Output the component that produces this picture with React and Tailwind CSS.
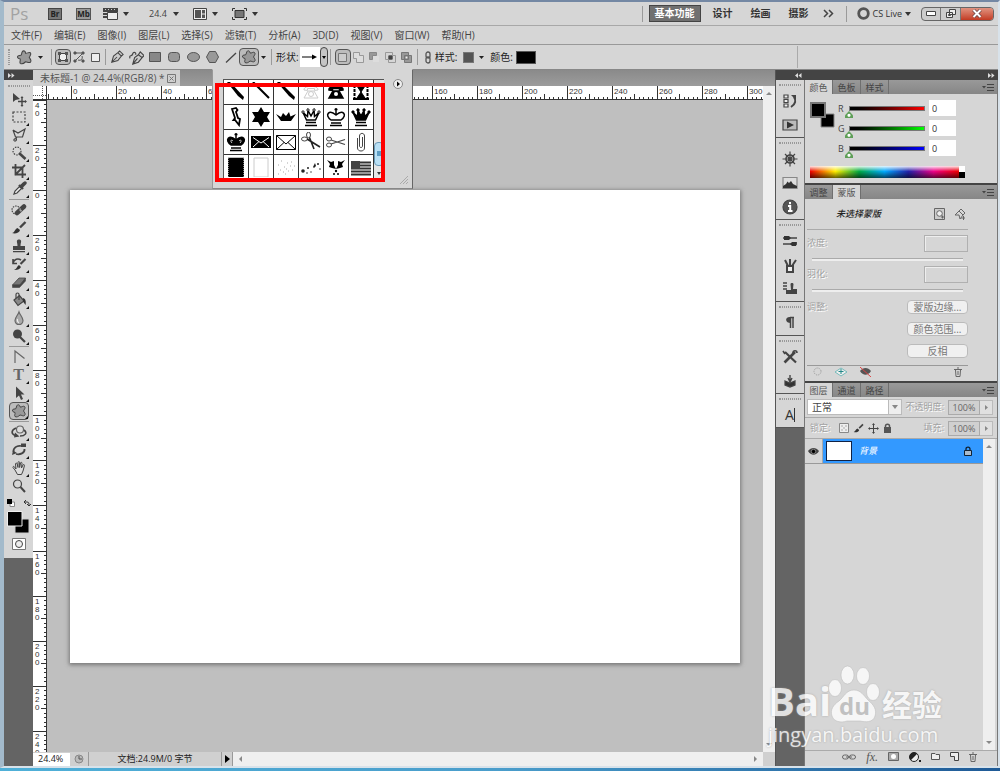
import React, { useEffect, useRef, useState } from "react";

const FONT = "font-['Open_Sans','Noto_Sans_CJK_SC',sans-serif]";

const menus = [
  "文件(F)", "编辑(E)", "图像(I)", "图层(L)", "选择(S)", "滤镜(T)",
  "分析(A)", "3D(D)", "视图(V)", "窗口(W)", "帮助(H)",
];

const BLOB =
  "M6 2.5C7 1 9 2 9 4C10.500 4.500 12 2.500 13.500 3.500C15 5 13 6.500 12.500 8C13.500 9.500 15 11 13.500 12.500C12 13.500 10.500 12 9 12C7.500 13.500 5.500 14.500 4 13.500C3 12 4.500 11 4 9.500C2.500 9 1 8.500 1.500 7C2 5.500 4 6.500 5 5.500C5.500 4.500 5.200 3.500 6 2.500Z";

function Svg({ size = 16, box = "0 0 16 16", children }) {
  return (
    <svg
      width={size}
      height={size}
      viewBox={box}
      fill="none"
      stroke="#444"
      strokeWidth="1.2"
      className="shrink-0"
      aria-hidden="true"
    >
      {children}
    </svg>
  );
}

function Caret() {
  return (
    <svg width="6" height="4" viewBox="0 0 6 4" fill="#333" className="shrink-0">
      <path d="M0 0H6L3 4Z" />
    </svg>
  );
}

function Divider() {
  return <div className="h-4 w-px shrink-0 bg-[#9a9a9a]" />;
}

/* ---------- tool icons ---------- */
const toolIcons = {
  move: (
    <>
      <path d="M2 2V11L4.500 9L9 8Z" fill="#444" stroke="none" />
      <path d="M11 6.500V14.500M7 10.500H15" strokeWidth="1.400" />
      <path d="M11 5L9.500 7H12.500ZM11 16L9.500 14H12.500ZM16 10.500L14 9V12Z" fill="#444" stroke="none" />
    </>
  ),
  marquee: <rect x="2" y="3" width="12" height="10" strokeDasharray="2 1.500" />,
  lasso: <path d="M2 3L7 6L14 2L11.500 10H6L5 11.500C6.500 13 4 15 3 13.500C2.500 12 4 11.500 5 11.500M2 3L4.500 10L6 10" />,
  wand: (
    <>
      <circle cx="6" cy="6" r="4" strokeDasharray="1.500 1.200" />
      <path d="M8 8L14.500 14" strokeWidth="2.600" />
    </>
  ),
  crop: <path d="M4.500 1V11.500H15M1 4.500H11.500V15M4 12L14 2" strokeWidth="1.800" />,
  eyedropper: (
    <>
      <path d="M3 13L4 10L8.500 5.500L10.500 7.500L6 12Z" fill="#eee" />
      <path d="M8 4L12 8M9.500 5.500L13 2" strokeWidth="2.400" />
      <path d="M11 5L14 2" strokeWidth="3.400" strokeLinecap="round" />
    </>
  ),
  heal: (
    <>
      <circle cx="5" cy="8" r="4" strokeDasharray="1.500 1" />
      <path d="M6 11L13 4.500" strokeWidth="4.500" strokeLinecap="round" />
      <path d="M8 8L11 8.500M9 6L10 10" stroke="#aaa" strokeWidth="0.800" />
    </>
  ),
  brush: (
    <>
      <path d="M14.500 2L9 7.500" strokeWidth="2.400" />
      <path d="M1 13C4 12.500 3.500 9 6.500 8L9 10C8.500 13 4 14 1 13Z" fill="#333" stroke="none" />
    </>
  ),
  stamp: <path d="M6 2.500C6.500 1 9.500 1 10 2.500C10.500 4 9.500 5 9.500 8H14V12H2V8H6.500C6.500 5 5.500 4 6 2.500ZM2 13H14V14.200H2Z" fill="#444" stroke="none" />,
  history: (
    <>
      <path d="M14.500 3L9.500 8" strokeWidth="2.200" />
      <path d="M3 14C6 13 6 10 8 9L10 11C9 13 6 14.500 3 14Z" fill="#333" stroke="none" />
      <path d="M2 7C3 3 7 2 10 4M2 3V7.500H6" strokeWidth="1.600" />
    </>
  ),
  eraser: (
    <>
      <path d="M1.500 11L8 4H14.500L9 11Z" fill="#777" strokeWidth="0.800" />
      <path d="M1.500 11V13.500H8.500L14.500 7V4L9 11Z" fill="#444" strokeWidth="0.600" />
    </>
  ),
  bucket: (
    <>
      <path d="M3 8L8.500 3.500L13 9L7 13.500Z" fill="#888" />
      <path d="M8 8V2.500C8 0.500 5 0.500 5 2.500V6" />
      <path d="M12 6C15 7 15 10 14.500 13L12 9.500Z" fill="#333" stroke="none" />
    </>
  ),
  drop: (
    <>
      <path d="M8 2C9 5 12 7.500 12 10.500C12 13 10 14.500 8 14.500C6 14.500 4 13 4 10.500C4 7.500 7 5 8 2Z" fill="#aaa" stroke="#666" />
      <path d="M6.500 9C6 11 7 12.500 8 12.500" stroke="#eee" />
    </>
  ),
  dodge: (
    <>
      <circle cx="6.500" cy="6" r="4.500" fill="#444" stroke="none" />
      <path d="M9 9L14 14" strokeWidth="2.200" />
    </>
  ),
  pen: <path d="M4 14V2L13.500 9.500" stroke="#666" />,
  arrow: <path d="M5 1.500V13L8 10.500L10 15L12 14L10 9.500H13.500Z" fill="#444" stroke="none" />,
  shape: <path d={BLOB} fill="#999" strokeWidth="1" />,
  orbit: (
    <>
      <circle cx="9" cy="5.500" r="3.500" fill="#ddd" stroke="#666" />
      <path d="M5 4C0 6 0 10 4 11.500M13 6C17 9 14 12 9 12" strokeWidth="1.600" />
      <path d="M3 13.500L4 8.500L8.500 12.500Z" fill="#444" stroke="none" />
    </>
  ),
  camera: (
    <>
      <path d="M2.500 10C2 6 6 3 10 4M13.500 7C14 11 9 13 5 12" strokeWidth="1.800" />
      <path d="M1 13L2 8.500L6 11ZM10 1.500H15V5H10Z" fill="#444" stroke="none" />
    </>
  ),
  hand: <path d="M4 10L2 7.500C1.500 6.500 3 6 3.500 7L5 9L4.500 4C4.500 2.800 6 2.800 6.200 4L7 7.500V2.500C7 1.300 8.600 1.300 8.600 2.500V7.500L9.500 3C9.800 1.900 11.200 2.200 11 3.500L10.500 8L12 5C12.600 4 13.800 4.600 13.400 5.800L12 11L10.500 14.500H6.500Z" fill="#ddd" strokeWidth="1" />,
  zoom: (
    <>
      <circle cx="6.500" cy="6" r="4" />
      <path d="M9.500 9L14 14" strokeWidth="2" />
    </>
  ),
};

const toolGroups = [
  ["move", "marquee", "lasso", "wand", "crop", "eyedropper"],
  ["heal", "brush", "stamp", "history", "eraser", "bucket", "drop", "dodge"],
  ["pen", "type", "arrow", "shape"],
  ["orbit", "camera", "hand", "zoom"],
];

function Tool({ name, active, onClick }) {
  return (
    <button
      aria-label={name}
      onClick={onClick}
      className={`relative flex h-[18px] w-[20px] items-center justify-center ${
        active ? "rounded-sm border border-[#555] bg-[#bdbdbd]" : ""
      }`}
    >
      {name === "type" ? (
        <span className="font-['Liberation_Serif',serif] text-[16px] leading-4 font-bold text-[#666]">T</span>
      ) : (
        <Svg>{toolIcons[name]}</Svg>
      )}
      {name !== "move" && name !== "zoom" && (
        <svg width="3" height="3" className="absolute right-0 bottom-0">
          <path d="M3 0V3H0Z" fill="#111" />
        </svg>
      )}
    </button>
  );
}

function Grip() {
  return <div className="mx-auto mt-1 mb-[3px] h-[2px] w-[22px] border-y border-dotted border-[#999]" />;
}

function ToolBar() {
  const [active, setActive] = useState("shape");

  return (
    <aside className="flex w-[29px] shrink-0 flex-col bg-[#646464]">
      <div className="flex h-[10px] items-center bg-[#444] pl-1 text-[#ddd]">
        <svg width="7" height="5" fill="currentColor"><path d="M0 0L3 2.500L0 5ZM3.500 0L6.500 2.500L3.500 5Z" /></svg>
      </div>
      <div className="flex flex-col items-center bg-[#d6d6d6] pt-px pb-2">
        <Grip />
        {toolGroups.map((group, i) => (
          <div
            key={i}
            className={`flex flex-col items-center ${i > 0 ? "mt-px border-t border-[#999] pt-px" : ""}`}
          >
            {group.map((name) => (
              <Tool key={name} name={name} active={active === name} onClick={() => setActive(name)} />
            ))}
          </div>
        ))}
        <div className="mt-1 flex gap-2">
          <svg width="8" height="8"><path d="M3 3H7.500V7.500H3Z" fill="#fff" stroke="#888" /><path d="M0 0H5V5H0Z" fill="#000" /></svg>
          <svg width="8" height="8" fill="none" stroke="#333"><path d="M1 3H4C6 3 6 4 6 7M3 1L1 3L3 5M4 5L6 7L8 5" /></svg>
        </div>
        <svg width="23" height="23" className="mt-1">
          <path d="M8 8H22V22H8Z" fill="#000" stroke="#ccc" />
          <path d="M0.500 0.500H15V15H0.500Z" fill="#000" stroke="#eee" />
        </svg>
        <button aria-label="快速蒙版" className="mt-1">
          <svg width="14" height="12" stroke="#777">
            <path d="M0.500 0.500H13.500V11.500H0.500Z" fill="#fff" />
            <circle cx="7" cy="6" r="3.500" fill="#eee" stroke="#444" />
          </svg>
        </button>
      </div>
    </aside>
  );
}

/* ---------- top bars ---------- */
function AppBar() {
  return (
    <header className="flex h-[24px] shrink-0 items-center border-b border-[#a8a8a8] pr-1 pl-[6px] text-[10px] text-[#444]">
      <span className="w-[38px] text-[17px] leading-5 text-[#a2a2a2]">Ps</span>
      <button className="h-3 w-[14px] border border-[#444] bg-[#777] text-center text-[8px] leading-[10px] font-bold text-[#222]">Br</button>
      <button className="ml-[14px] h-3 w-[15px] border border-[#555] bg-[#999] text-center text-[8px] leading-[10px] font-bold text-[#222]">Mb</button>
      <button className="ml-3 flex items-center gap-[5px]" aria-label="查看额外内容">
        <svg width="15" height="12"><path d="M0 0H15V4H0ZM0 5H4V7H0ZM0 8H4V10H0Z" fill="#444" /><path d="M4.500 4.500H14.500V11.500H4.500Z" fill="#eee" stroke="#444" /><path d="M2 1.500H14" stroke="#ccc" strokeDasharray="1 2" /></svg>
        <Caret />
      </button>
      <button className="ml-5 flex items-center gap-[6px] text-[9px]">24.4 <Caret /></button>
      <button className="ml-[14px] flex items-center gap-[5px]" aria-label="排列文档">
        <svg width="14" height="12"><path d="M0.500 0.500H13.500V11.500H0.500Z" fill="#eee" stroke="#444" /><path d="M2 2H8V10H2ZM9 2H12V5.500H9ZM9 6.500H12V10H9Z" fill="#555" /></svg>
        <Caret />
      </button>
      <button className="ml-[14px] flex items-center gap-[5px]" aria-label="屏幕模式">
        <svg width="15" height="12" fill="none" stroke="#333"><path d="M0.500 3V0.500H3M12 0.500H14.500V3M14.500 9V11.500H12M3 11.500H0.500V9" /><path d="M3 2.500H12V9.500H3Z" fill="#777" /></svg>
        <Caret />
      </button>
      <div className="ml-auto flex items-center text-[10px] font-bold text-[#333]">
        <Divider />
        <button className="ml-[6px] h-[17px] w-[52px] border border-[#444] bg-[#707070] text-white">基本功能</button>
        <button className="ml-3">设计</button>
        <button className="ml-[18px]">绘画</button>
        <button className="ml-[18px]">摄影</button>
        <button className="ml-[14px]" aria-label="更多">
          <svg width="11" height="9" fill="none" stroke="#444" strokeWidth="1.500"><path d="M1 1L4.500 4.500L1 8M6 1L9.500 4.500L6 8" /></svg>
        </button>
        <div className="mr-[10px] ml-3"><Divider /></div>
        <button className="flex items-center gap-[3px] text-[9px] font-normal">
          <svg width="13" height="13" fill="none"><circle cx="6.500" cy="6.500" r="4.800" stroke="#555" strokeWidth="2.800" /></svg>
          CS Live <Caret />
        </button>
        <div className="ml-[10px] flex h-[14px] overflow-hidden rounded-sm border border-[#666] bg-[#ccc]">
          <button aria-label="最小化" className="flex w-[19px] items-center justify-center border-r border-[#777]">
            <svg width="10" height="5"><path d="M0.500 0.500H9.500V4.500H0.500Z" fill="#fff" stroke="#444" /></svg>
          </button>
          <button aria-label="还原" className="flex w-[20px] items-center justify-center border-r border-[#777]">
            <svg width="10" height="9" fill="#eee" stroke="#444"><path d="M3.500 0.500H9.500V5.500H3.500ZM0.500 3.500H6.500V8.500H0.500Z" /><path d="M2.500 5.500H4.500V6.500H2.500Z" /></svg>
          </button>
          <button aria-label="关闭" className="flex w-[32px] items-center justify-center bg-gradient-to-b from-[#e0927f] to-[#c23a22]">
            <svg width="10" height="9" fill="none"><path d="M1.500 1L8.500 8M8.500 1L1.500 8" stroke="#644" strokeWidth="3.500" /><path d="M1.500 1L8.500 8M8.500 1L1.500 8" stroke="#fff" strokeWidth="2" /></svg>
          </button>
        </div>
      </div>
    </header>
  );
}

function OptButton({ label, active, children }) {
  return (
    <button
      aria-label={label}
      className={`flex h-4 w-4 items-center justify-center ${active ? "rounded-sm border border-[#555] bg-[#bcbcbc]" : ""}`}
    >
      {children}
    </button>
  );
}

function OptionsBar() {
  return (
    <div className="flex h-[25px] shrink-0 items-center border-b border-[#888] pl-1 text-[10px] text-[#222]">
      <div className="h-4 w-[2px] border-x border-dotted border-[#999]" />
      <button className="ml-[6px] flex items-center gap-[5px]" aria-label="自定形状">
        <Svg size={17}><path d={BLOB} fill="#999" strokeWidth="1" /></Svg>
        <svg width="5" height="3"><path d="M0 0H5L2.500 3Z" fill="#222" /></svg>
      </button>
      <div className="mr-[3px] ml-2"><Divider /></div>
      <OptButton label="形状图层" active>
        <svg width="12" height="12"><path d="M2.500 2.500H9.500V9.500H2.500Z" fill="#eee" stroke="#444" /><path d="M1 1H4V4H1ZM8 1H11V4H8ZM1 8H4V11H1ZM8 8H11V11H8Z" fill="#555" /></svg>
      </OptButton>
      <OptButton label="路径">
        <svg width="12" height="12" fill="none" stroke="#555"><path d="M2 2H10L2 10M5 9C8 10 10 8 9 5" /><path d="M1 1H3V3H1ZM9 1H11V3H9ZM1 9H3V11H1ZM9 9H11V11H9Z" fill="#555" /></svg>
      </OptButton>
      <OptButton label="填充像素">
        <svg width="9" height="9"><path d="M0.500 0.500H8.500V8.500H0.500Z" fill="#eee" stroke="#555" /></svg>
      </OptButton>
      <div className="mr-[3px] ml-[2px]"><Divider /></div>
      <div className="flex items-center gap-[3px]">
        <OptButton label="钢笔">
          <Svg size={14}><path d="M2 14L4 7L9 3L13 7L9 12ZM2 14L8 8M9 3L11 1L15 5L13 7" fill="#ccc" /></Svg>
        </OptButton>
        <OptButton label="自由钢笔">
          <Svg size={15}><path d="M4 15L6 8L10 5L14 8L10 13ZM4 15L9 9M1 9C0 4 3 8 4 4C5 1 8 3 7 5M10 5L12 2L16 6L14 8" fill="#ccc" /></Svg>
        </OptButton>
        <OptButton label="矩形"><svg width="12" height="10"><path d="M0.500 0.500H11.500V9.500H0.500Z" fill="#888" stroke="#555" /></svg></OptButton>
        <OptButton label="圆角矩形"><svg width="12" height="10"><rect x="0.500" y="0.500" width="11" height="9" rx="3" fill="#999" stroke="#555" /></svg></OptButton>
        <OptButton label="椭圆"><svg width="13" height="10"><ellipse cx="6.500" cy="5" rx="6" ry="4.500" fill="#999" stroke="#555" /></svg></OptButton>
        <OptButton label="多边形"><svg width="13" height="12"><path d="M3.500 0.500H9.500L12.500 6L9.500 11.500H3.500L0.500 6Z" fill="#999" stroke="#555" /></svg></OptButton>
        <OptButton label="直线"><svg width="12" height="11"><path d="M1 10.500L11 1" stroke="#444" strokeWidth="1.300" /></svg></OptButton>
      </div>
      <button aria-label="自定形状工具" className="flex h-[18px] w-[20px] items-center justify-center rounded-sm border border-[#555] bg-[#bcbcbc]">
        <Svg><path d={BLOB} fill="#999" strokeWidth="1" /></Svg>
      </button>
      <svg width="5" height="3" className="ml-[2px]"><path d="M0 0H5L2.500 3Z" fill="#222" /></svg>
      <div className="mr-1 ml-[5px]"><Divider /></div>
      <span>形状:</span>
      <button aria-label="形状" className="ml-px flex h-5 w-5 items-center justify-center bg-white">
        <svg width="15" height="6"><path d="M0 3H11" stroke="#000" /><path d="M10 0.500L15 3L10 5.500Z" /></svg>
      </button>
      <button aria-label="打开形状" className="flex h-5 w-2 items-center justify-center rounded-sm border border-[#444] bg-[#c4c4c4]">
        <svg width="4" height="3"><path d="M0 0H4L2 3Z" /></svg>
      </button>
      <div className="mr-1 ml-[2px]"><Divider /></div>
      <OptButton label="新建" active><svg width="9" height="9"><path d="M0.500 0.500H8.500V8.500H0.500Z" fill="#ccc" stroke="#777" /></svg></OptButton>
      <OptButton label="添加"><svg width="11" height="11"><path d="M0.500 0.500H6.500V3.500H10.500V10.500H3.500V6.500H0.500Z" fill="#ddd" stroke="#999" /></svg></OptButton>
      <OptButton label="减去"><svg width="11" height="11"><path d="M0.500 0.500H7.500V3.500H3.500V7.500H0.500Z" fill="#999" stroke="#888" /><path d="M4 4H10V10H4Z" fill="#ddd" /></svg></OptButton>
      <OptButton label="交叉"><svg width="11" height="11" fill="none" stroke="#999"><path d="M0.500 0.500H7.500V7.500H0.500ZM3.500 3.500H10.500V10.500H3.500Z" /><path d="M4 4H7V7H4Z" fill="#444" stroke="#444" /></svg></OptButton>
      <OptButton label="排除"><svg width="11" height="11" stroke="#777"><path d="M0.500 0.500H7.500V7.500H0.500ZM3.500 3.500H10.500V10.500H3.500Z" fill="#999" /><path d="M4 4H7V7H4Z" fill="#eee" /></svg></OptButton>
      <div className="ml-[2px]"><Divider /></div>
      <svg width="8" height="13" fill="none" stroke="#555" strokeWidth="1.300" className="ml-[6px]"><rect x="2" y="1" width="4" height="6" rx="2" /><rect x="2" y="6" width="4" height="6" rx="2" /></svg>
      <span className="ml-[3px]">样式:</span>
      <button aria-label="样式" className="ml-[6px] flex items-center gap-[5px]">
        <span className="h-[11px] w-[11px] border border-[#777] bg-[#555]" />
        <svg width="5" height="3"><path d="M0 0H5L2.500 3Z" fill="#222" /></svg>
      </button>
      <span className="ml-[6px]">颜色:</span>
      <button aria-label="颜色" className="ml-[3px] h-[13px] w-5 border border-[#555] bg-black" />
      <div className="mr-[200px] ml-auto h-[22px] w-px bg-[#aaa]" />
    </div>
  );
}

/* ---------- custom shape picker ---------- */
const queen = "M4 18.500H16M5 15.500H15M5.500 13L2 5.500L6.500 9.500L7 3.500L10 9L13 3.500L13.500 9.500L18 5.500L14.500 13Z";
const queenDots = "M1 4H3V6H1ZM6 2H8V4H6ZM12 2H14V4H12ZM17 4H19V6H17Z";
const king = "M4 18.500H16M5 16H15M5 13C-2 8 3 2 10 8C17 2 22 8 15 13ZM10 8V1M8.500 2.500H11.500";
const phone = "M3 8C2 3 18 3 17 8L13.500 8.500V6.500H6.500V8.500ZM7 9H13L17 16H3Z";

const shapes = [
  <path d="M1 0L4 0L18 15L17 18L12 14Z" fill="#000" />,
  <path d="M2 0L18 16" stroke="#000" strokeWidth="2" />,
  <path d="M1 0L4 0L19 15L18 18L13 14Z" fill="#000" />,
  <g fill="none" stroke="#ccc"><path d={phone} /><circle cx="10" cy="12" r="2.500" /></g>,
  <g><path d={phone} fill="#000" stroke="#000" strokeWidth="1.500" /><circle cx="10" cy="12" r="2" fill="#fff" /></g>,
  <g stroke="#000"><path d="M2 3H18M2 17H18" strokeWidth="2" /><path d="M3.500 3V17M16.500 3V17" strokeWidth="2" strokeDasharray="3 1" /><path d="M6 4H14L10 10L14 16H6L10 10Z" /></g>,
  <path d="M6 2L10 1L11.500 3L10 5L12 11L14 12L13 18L9 13L7.500 13L9 11L7 5Z" fill="#fff" stroke="#000" strokeWidth="1.800" />,
  <path d="M10 0L13 5L19 5L16 10L19 15L13 15L10 20L7 15L1 15L4 10L1 5L7 5Z" fill="#000" />,
  <path d="M0 7L5 10L7 6L10 9L13 5L14.500 9.500L20 7L15 14H5Z" fill="#000" />,
  <g stroke="#000"><path d={queen} fill="none" strokeWidth="1.500" /><path d={queenDots} fill="#fff" strokeWidth="0.800" /></g>,
  <path d={king} fill="none" stroke="#000" strokeWidth="1.500" />,
  <g stroke="#000"><path d={queen} strokeWidth="1.500" /><path d={queenDots} /></g>,
  <g><path d={king} fill="#000" stroke="#000" strokeWidth="1.500" /><path d="M7 9C5 7 4 9 6 11M13 9C15 7 16 9 14 11" stroke="#fff" fill="none" strokeWidth="0.800" /></g>,
  <g><path d="M0 4H20V16H0Z" fill="#000" /><path d="M2 5.500L10 11L18 5.500M2 15L8 9.500M18 15L12 9.500" stroke="#fff" fill="none" /></g>,
  <path d="M0.500 3.500H19.500V17.500H0.500ZM0.500 3.500L10 12L19.500 3.500M0.500 17.500L8 10.500M19.500 17.500L12 10.500" stroke="#000" fill="none" />,
  <g fill="none" stroke="#444"><ellipse cx="3.500" cy="7" rx="3" ry="2" /><ellipse cx="7.500" cy="3" rx="2" ry="2.800" /><path d="M6 7L19 15M8.500 5.500L13 17" stroke="#222" strokeWidth="1.600" /></g>,
  <g fill="none" stroke="#444"><ellipse cx="3" cy="7" rx="2.500" ry="2" /><ellipse cx="3" cy="13" rx="2.500" ry="2" /><path d="M5 8L19 12.500M5 12L19 7.500" strokeWidth="1.300" /></g>,
  <path d="M11.500 5V14C11.500 16 8.500 16 8.500 14V4C8.500 0.500 13.500 0.500 13.500 4V16C13.500 20 6.500 20 6.500 16V6" fill="none" stroke="#444" />,
  <path d="M2.500 1H17.500V20H2.500Z" fill="#000" stroke="#000" strokeDasharray="1 1" />,
  <path d="M3 1H17V20H3Z" fill="#fff" stroke="#ccc" />,
  <path d="M2 8h1M5 4h1M8 10h1M11 6h1M14 9h1M16 13h1M4 13h1M7 15h1M12 14h1M9 17h1M15 5h1M18 9h1M2 17h1M10 12h1" stroke="#aaa" />,
  <g fill="#222"><circle cx="2" cy="14" r="1.800" /><circle cx="7" cy="11" r="1" /><circle cx="6" cy="16" r="0.800" /><path d="M12 10L14 6L15 9L13 11Z" /><circle cx="17" cy="7" r="1" /><circle cx="10" cy="15" r="0.700" /><circle cx="19" cy="12" r="0.800" /></g>,
  <g fill="#000"><path d="M1 3L5 5L8 4L8 8L10 12L6 11L3 10L4 7ZM19 3L15 5L12 4L12 8L10 12L14 11L17 10L16 7Z" /><circle cx="10" cy="14" r="1.200" /><circle cx="8" cy="17" r="1" /><circle cx="12" cy="17" r="1" /></g>,
  <g><path d="M0 5.500H20M0 8.500H20M0 11.500H20M0 14.500H20M0 17.500H20" stroke="#333" strokeWidth="1.800" /><path d="M0 4H9V12H0Z" fill="#444" /></g>,
];

function ShapePicker() {
  return (
    <div className="absolute top-[67px] left-[208px] z-10 h-[120px] w-[201px] border border-[#999] border-t-[#d6d6d6] border-r-[#666] border-b-[#888] bg-[#d6d6d6]">
      <div className="absolute top-[9px] left-[10px] flex border-t border-l border-[#555]">
        <div className="grid h-[99px] grid-cols-6 overflow-hidden bg-white">
          {shapes.map((shape, i) => (
            <button
              key={i}
              aria-label={`形状 ${i + 1}`}
              className="flex h-[25px] w-[25px] items-center justify-center border-r border-b border-[#333]"
            >
              <svg width="20" height="20" viewBox="0 0 20 20">{shape}</svg>
            </button>
          ))}
        </div>
        <div className="relative w-[10px] bg-[#e6e6e6]">
          <div className="absolute top-[62px] h-[24px] w-[10px] rounded-sm border border-[#6b9ab8] bg-[#b9e0f5]">
            <div className="mx-auto mt-2 h-[5px] w-1 bg-[#5d9dc4]" />
          </div>
          <svg width="4" height="3" className="absolute bottom-1 left-[3px]"><path d="M0 0H4L2 3Z" fill="#333" /></svg>
        </div>
      </div>
      <button aria-label="菜单" className="absolute top-[9px] right-[9px]">
        <svg width="10" height="10"><circle cx="5" cy="5" r="4.500" fill="#eee" stroke="#888" /><path d="M4 2.500L7 5L4 7.500Z" fill="#000" /></svg>
      </button>
      <svg width="8" height="8" className="absolute right-1 bottom-1" stroke="#aaa"><path d="M0 8L8 0M3 8L8 3M6 8L8 6" /></svg>
      <div className="absolute top-[13px] left-[2px] h-[99px] w-[170px] border-4 border-[#f00]" />
    </div>
  );
}

/* ---------- document ---------- */
const STEP = 4.507; // pixels for two millimetres at 24.4%

function useSize() {
  const ref = useRef(null);
  const [size, setSize] = useState({ width: 0, height: 0 });

  useEffect(() => {
    const observer = new ResizeObserver(([entry]) => {
      setSize({ width: entry.contentRect.width, height: entry.contentRect.height });
    });
    observer.observe(ref.current);
    return () => observer.disconnect();
  }, []);

  return [ref, size];
}

function getTicks(origin, length) {
  const ticks = [];
  for (let i = -Math.ceil(origin / STEP); origin + i * STEP < length; i++) {
    ticks.push({
      i,
      pos: Math.round(origin + i * STEP),
      len: i % 10 === 0 ? 14 : i % 5 === 0 ? 5 : 2,
    });
  }
  return ticks;
}

function HRuler() {
  const [ref, { width }] = useSize();
  const ticks = getTicks(24, width);

  return (
    <div ref={ref} className="h-[14px] min-w-0 flex-1 overflow-hidden border-b border-[#333] bg-white">
      <svg width={width} height="13" aria-label="标尺">
        {ticks.map(({ i, pos, len }) => (
          <path key={i} d={`M${pos + 0.5} ${13 - len}V13`} stroke="#333" />
        ))}
        {ticks.filter(({ i, pos }) => i % 10 === 0 && pos + 14 < width).map(({ i, pos }) => (
          <text key={i} x={pos + 2} y="8" className="fill-[#333] font-['Liberation_Sans',sans-serif] text-[8px]">{i * 2}</text>
        ))}
      </svg>
    </div>
  );
}

function VRuler() {
  const [ref, { height }] = useSize();
  const ticks = getTicks(90, height);

  return (
    <div ref={ref} className="w-[14px] shrink-0 overflow-hidden border-r border-[#333] bg-white">
      <svg width="13" height={height} aria-label="标尺">
        {ticks.map(({ i, pos, len }) => (
          <path key={i} d={`M${13 - len} ${pos + 0.5}H13`} stroke="#333" />
        ))}
        {ticks.filter(({ i }) => i % 10 === 0).map(({ i, pos }) =>
          String(Math.abs(i * 2)).split("").map((digit, n) => (
            <text key={`${i}-${n}`} x="2" y={pos + 8 + n * 8} className="fill-[#333] font-['Liberation_Sans',sans-serif] text-[8px]">{digit}</text>
          ))
        )}
      </svg>
    </div>
  );
}

function Arrow({ d }) {
  return <svg width="6" height="6" className="shrink-0"><path d={d} fill="#888" /></svg>;
}

function DocumentArea() {
  return (
    <main className="flex min-w-0 flex-1 flex-col bg-[#bfbfbf]">
      <div className="flex h-4 shrink-0 bg-gradient-to-b from-[#8a8a8a] to-[#9c9c9c]">
        <div className="flex h-4 items-center gap-[3px] bg-[#d0d0d0] pr-1 pl-[7px] text-[10px] text-[#555]">
          未标题-1 @ 24.4%(RGB/8) *
          <button aria-label="关闭文档">
            <svg width="9" height="9" fill="none" stroke="#777"><path d="M0.500 0.500H8.500V8.500H0.500ZM2.500 2.500L6.500 6.500M6.500 2.500L2.500 6.500" /></svg>
          </button>
        </div>
      </div>
      <div className="flex min-h-0 flex-1">
        <div className="flex min-w-0 flex-1 flex-col">
          <div className="flex h-[14px] shrink-0">
            <svg width="14" height="14" className="shrink-0 border-r border-b border-[#333] bg-white">
              <path d="M9.500 0V14M0 9.500H14" stroke="#555" strokeDasharray="1 1" />
            </svg>
            <HRuler />
          </div>
          <div className="flex min-h-0 flex-1">
            <VRuler />
            <div className="flex flex-1 px-[23px] pt-[90px] pb-[89px]">
              <div className="flex-1 bg-white shadow-[0_1px_4px_1px_#777]" />
            </div>
          </div>
        </div>
        <div className="flex w-3 shrink-0 flex-col items-center justify-between bg-[#efefef] py-1">
          <Arrow d="M0 5H6L3 2Z" />
          <Arrow d="M0 1H6L3 4Z" />
        </div>
      </div>
      <div className="flex h-[14px] shrink-0 items-center bg-[#d0d0d0] text-[10px] text-[#222]">
        <input aria-label="缩放" defaultValue="24.4%" className="h-[13px] w-[37px] bg-white pl-[5px] text-[9px]" />
        <div className="flex h-full w-[19px] items-center justify-center border-r border-[#999]">
          <svg width="10" height="10" fill="none" stroke="#888"><circle cx="5" cy="5" r="4" fill="#bbb" /><path d="M5 2V5H8" stroke="#555" /></svg>
        </div>
        <div className="flex h-full w-[133px] items-center justify-center border-r border-[#999] text-[9px]">文档:24.9M/0 字节</div>
        <button aria-label="状态菜单" className="flex h-full w-[11px] items-center justify-center border-r border-[#999]">
          <svg width="5" height="8"><path d="M0 0L5 4L0 8Z" /></svg>
        </button>
        <div className="flex h-full flex-1 items-center justify-between bg-[#efefef] px-1">
          <Arrow d="M5 0V6L2 3Z" />
          <Arrow d="M1 0V6L4 3Z" />
        </div>
        <div className="w-3" />
      </div>
    </main>
  );
}

/* ---------- icon dock ---------- */
const dock = [
  [
    ["历史记录", <><path d="M2 2H6V5H2ZM2 6.500H6V9.500H2ZM2 11H6V14H2Z" fill="#eee" /><path d="M9 14C14 11 14 7 12 4" strokeWidth="2" /><path d="M9 2H14V7Z" fill="#444" stroke="none" /></>],
    ["动作", <><path d="M1 3H15V13H1Z" fill="#bbb" /><path d="M5 4.500L12 8L5 11.500Z" fill="#333" stroke="none" /></>],
  ],
  [
    ["导航器", <><circle cx="8" cy="8" r="4" strokeWidth="1.600" /><circle cx="8" cy="8" r="1.200" fill="#333" /><path d="M8 0.500V15.500M0.500 8H15.500M3 3L13 13M13 3L3 13" /></>],
    ["直方图", <><path d="M1 2.500H15V13.500H1Z" fill="#ddd" stroke="#888" /><path d="M1 13V11L4 9L5.500 6.500L7 8L9 6L11 9L15 11V13Z" fill="#333" stroke="none" /></>],
    ["信息", <><circle cx="8" cy="8" r="7" fill="#555" stroke="#444" /><path d="M8 3V5.200M6 7H8.200V12M6 12H10.500" stroke="#fff" strokeWidth="2" /></>],
  ],
  [
    ["画笔预设", <><path d="M1 5H15M1 11H15" strokeWidth="1.600" /><path d="M2 3H7L9 5L7 7H2ZM15 9L10 9L8 11L10 13L14 13Z" fill="#333" stroke="none" /></>],
    ["画笔", <><path d="M5 9H11V15H5Z" fill="#eee" strokeWidth="2" /><path d="M6 9L3 3M8 9V2M10 9L14 3" strokeWidth="2" /></>],
    ["仿制源", <><path d="M1 2H5M1 5H5M1 8H5" strokeWidth="1.500" /><path d="M8.500 3C8.500 1.500 11.500 1.500 11.500 3L11 8H15V13H4V9H9Z" fill="#444" stroke="none" /></>],
  ],
  [["段落", <><path d="M11 2V13M8.500 2V13M8 2.500H12" strokeWidth="1.500" /><path d="M9 2C2.500 1 2.500 8 9 8Z" fill="#444" stroke="none" /></>]],
  [
    ["工具预设", <><path d="M3 3L14 13.500" strokeWidth="2.200" /><path d="M13 3L2.500 13.500" strokeWidth="2.600" /><path d="M1 2L3 5M11 4C11 1 15 1 15 4" strokeWidth="1.600" /></>],
    ["3D", <><path d="M3 8L8 10L13 8V12L8 14L3 12Z" fill="#333" /><path d="M8 2V9M6 5L8 9L10 5" strokeWidth="1.400" /></>],
  ],
  [["字符", null]],
];

function Dock() {
  return (
    <div className="flex w-[28px] shrink-0 flex-col bg-[#646464]">
      {dock.map((group, i) => (
        <div key={i} className="border-b border-[#555] bg-[#d6d6d6]">
          <Grip />
          {group.map(([label, icon]) => (
            <button key={label} aria-label={label} className="flex h-6 w-full items-center justify-center">
              {icon ? (
                <Svg>{icon}</Svg>
              ) : (
                <span className="border-r border-[#333] text-[14px] leading-[14px] text-[#333]">A</span>
              )}
            </button>
          ))}
        </div>
      ))}
    </div>
  );
}

/* ---------- panels ---------- */
function PanelTabs({ tabs, active }) {
  return (
    <div className="flex h-[14px] shrink-0 bg-gradient-to-b from-[#999] to-[#868686] text-[9px]">
      {tabs.map((tab) => (
        <button
          key={tab}
          className={`w-[28px] border-r border-[#6f6f6f] leading-[13px] ${tab === active ? "bg-[#d6d6d6] text-[#555]" : "text-[#444]"}`}
        >
          {tab}
        </button>
      ))}
      <button aria-label="面板菜单" className="mr-[3px] ml-auto">
        <svg width="12" height="7" stroke="#444"><path d="M5 0.500H12M5 3.500H12M5 6.500H12" /><path d="M0 2H4L2 4.500Z" fill="#444" stroke="none" /></svg>
      </button>
    </div>
  );
}

const channels = [
  { name: "R", bar: "bg-gradient-to-r from-black to-[#f00]" },
  { name: "G", bar: "bg-gradient-to-r from-black to-[#0f0]" },
  { name: "B", bar: "bg-gradient-to-r from-black to-[#00f]" },
];

function ColorPanel() {
  const [rgb, setRgb] = useState({ R: 0, G: 0, B: 0 });

  return (
    <section className="border-b-2 border-[#444]">
      <PanelTabs tabs={["颜色", "色板", "样式"]} active="颜色" />
      <div className="px-[5px] pt-[6px] pb-[5px]">
        <div className="flex">
          <svg width="25" height="27" className="mt-[2px]">
            <path d="M11 12H24V25H11Z" fill="#000" stroke="#888" />
            <path d="M1 1H15V15H1Z" fill="#000" stroke="#777" strokeWidth="2" />
          </svg>
          <div className="ml-[3px] flex flex-1 flex-col">
            {channels.map(({ name, bar }) => (
              <div key={name} className="flex h-5 items-start">
                <label htmlFor={name} className="w-[11px] text-[9px] leading-[18px] text-[#444]">{name}</label>
                <div className="w-[76px] pt-[6px]">
                  <div className={`h-[5px] border border-[#777] ${bar}`} />
                  <input
                    type="range"
                    min="0"
                    max="255"
                    aria-label={name}
                    value={rgb[name]}
                    onChange={(e) => setRgb({ ...rgb, [name]: e.target.value })}
                    className="-ml-1 block h-[7px] w-[84px] appearance-none bg-transparent [&::-webkit-slider-thumb]:h-[7px] [&::-webkit-slider-thumb]:w-2 [&::-webkit-slider-thumb]:appearance-none [&::-webkit-slider-thumb]:bg-[radial-gradient(circle_at_50%_62%,#fff_1px,#5f9f58_2px)] [&::-webkit-slider-thumb]:[clip-path:polygon(50%_0,100%_60%,100%_100%,0_100%,0_60%)]"
                  />
                </div>
                <input
                  id={name}
                  value={rgb[name]}
                  onChange={(e) => setRgb({ ...rgb, [name]: e.target.value })}
                  className="ml-1 h-4 w-[27px] bg-white pl-[3px] text-[9px] text-[#333]"
                />
              </div>
            ))}
          </div>
        </div>
        <div className="mt-[6px] mr-[27px] flex h-3">
          <div className="flex-1 bg-[linear-gradient(to_bottom,rgba(255,255,255,0.9),transparent_45%,rgba(0,0,0,0.6)),linear-gradient(to_right,#e00,#fe0_17%,#0a4_33%,#0af_50%,#22a_66%,#e08_83%,#e00)]" />
          <div className="w-[6px] bg-gradient-to-b from-white from-50% to-black to-50%" />
        </div>
      </div>
    </section>
  );
}

const embossed = "whitespace-nowrap text-[#a2a2a2] [text-shadow:1px_1px_0_#fff]";

function MaskRow({ label }) {
  return (
    <div className="h-[31px]">
      <div className="flex h-[22px] items-center justify-between">
        <label htmlFor={label} className={embossed}>{label}:</label>
        <input id={label} disabled className="h-[17px] w-[44px] border border-[#b0b0b0] shadow-[inset_1px_1px_0_#eee]" />
      </div>
      <div className="mx-[5px] mt-1 h-[3px] border-t border-[#aaa] bg-[#eee]" />
    </div>
  );
}

function MaskPanel() {
  return (
    <section className="border-b-2 border-[#444] text-[9px]">
      <PanelTabs tabs={["调整", "蒙版"]} active="蒙版" />
      <div className="mr-[29px] ml-[2px]">
        <div className="flex h-[31px] items-center border-b border-[#aaa] pl-[29px] text-[#222]">
          <em className="flex-1 font-medium">未选择蒙版</em>
          <button aria-label="添加像素蒙版" className="mr-[9px]">
            <svg width="11" height="12" stroke="#666"><path d="M0.500 0.500H10.500V11.500H0.500Z" fill="#ccc" /><circle cx="5.500" cy="5.500" r="2.800" fill="#eee" /><path d="M7 9H10M8.500 7.500V10.500" /></svg>
          </button>
          <button aria-label="添加矢量蒙版" className="mr-[2px]">
            <svg width="12" height="12" fill="none" stroke="#666"><path d="M1 7L5 3L9 7L6 11L5 7ZM5 3L7 1L11 5L9 7M7 10H11M9.500 8V12" /></svg>
          </button>
        </div>
        <div className="pt-[2px]">
          <MaskRow label="浓度" />
          <MaskRow label="羽化" />
        </div>
        <div className="flex items-start justify-between border-b border-[#999] pt-[6px] pb-[7px]">
          <span className={embossed}>调整:</span>
          <div className="flex flex-col gap-2">
            {["蒙版边缘...", "颜色范围...", "反相"].map((text) => (
              <button key={text} className="h-[14px] w-[61px] rounded-sm border border-[#bbb] bg-[#f0f0f0] text-[10px] leading-3 text-[#777]">
                {text}
              </button>
            ))}
          </div>
        </div>
        <div className="flex h-[15px] items-start gap-3 pt-px pl-[6px]">
          <svg width="9" height="9" fill="none"><circle cx="4.500" cy="4.500" r="3.500" stroke="#999" strokeDasharray="1 1" /></svg>
          <svg width="14" height="10" fill="#eee" stroke="#7bb"><path d="M1 5L7 1L13 5L7 9Z" /><path d="M7 2V7M4.500 4.500H9.500" stroke="#288" /></svg>
          <svg width="11" height="10"><path d="M0 4C3 0 8 0 11 4C8 9 3 9 0 4Z" fill="#555" /><path d="M0 0L11 10" stroke="#d44" /></svg>
          <svg width="8" height="10" fill="none" stroke="#666" className="mr-[6px] ml-auto"><path d="M0 2.500H8M3 1H5M1.500 3L2 9.500H6L6.500 3M4 4V8" /></svg>
        </div>
      </div>
    </section>
  );
}

function Percent({ label }) {
  return (
    <div className="flex h-[14px] items-center">
      <label htmlFor={label} className={embossed}>{label}:</label>
      <input id={label} disabled defaultValue="100%" className="ml-1 h-[15px] w-[32px] border border-[#aaa] bg-[#d0d0d0] text-center text-[9px] text-[#666]" />
      <button aria-label={`${label}滑块`} className="flex h-[15px] w-[13px] items-center justify-center border border-l-0 border-[#bbb] bg-[#e0e0e0]">
        <svg width="3" height="5"><path d="M0 0L3 2.500L0 5Z" fill="#888" /></svg>
      </button>
    </div>
  );
}

function LayersPanel() {
  return (
    <section className="flex min-h-0 flex-1 flex-col text-[9px]">
      <PanelTabs tabs={["图层", "通道", "路径"]} active="图层" />
      <div className="flex h-[21px] shrink-0 items-center justify-between border-b border-[#aaa] pr-1 pl-[2px]">
        <div className="relative">
          <select aria-label="混合模式" className="block h-4 w-[95px] appearance-none border border-[#bbb] bg-white pl-1 text-[10px] leading-[14px] text-[#444]">
            <option>正常</option>
          </select>
          <div className="pointer-events-none absolute top-0 right-0 flex h-4 w-[14px] items-center justify-center border border-[#bbb] bg-[#eee]">
            <svg width="6" height="4"><path d="M0 0H6L3 4Z" fill="#888" /></svg>
          </div>
        </div>
        <Percent label="不透明度" />
      </div>
      <div className="flex h-[21px] shrink-0 items-center justify-between border-b border-[#aaa] pr-1 pl-[5px]">
        <div className="flex items-center gap-1">
          <span className={embossed}>锁定:</span>
          <svg width="10" height="10" className="ml-[5px]"><path d="M0.500 0.500H9.500V9.500H0.500Z" fill="#eee" stroke="#888" /><path d="M2 2H4V4H2ZM6 2H8V4H6ZM4 4H6V6H4ZM2 6H4V8H2ZM6 6H8V8H6Z" fill="#ccc" /></svg>
          <Svg size={11}>{toolIcons.brush}</Svg>
          <svg width="11" height="11" fill="none" stroke="#444"><path d="M5.500 1V10M1 5.500H10" /><path d="M5.500 0L7 2H4ZM5.500 11L7 9H4ZM0 5.500L2 4V7ZM11 5.500L9 4V7Z" fill="#444" stroke="none" /></svg>
          <svg width="9" height="10"><path d="M2.500 5V3C2.500 0.500 6.500 0.500 6.500 3V5" fill="none" stroke="#555" strokeWidth="1.500" /><path d="M1 4H8V10H1Z" fill="#555" /></svg>
        </div>
        <Percent label="填充" />
      </div>
      <div className="flex min-h-0 flex-1 border-b border-[#aaa]">
        <div className="flex-1">
          <div className="flex h-[25px] border-b border-[#999]">
            <button aria-label="显示图层" className="flex w-[18px] items-center justify-center border-r border-[#aaa]">
              <svg width="11" height="9"><path d="M0 4C3 0 8 0 11 4C8 9 3 9 0 4Z" fill="#444" /><circle cx="5.500" cy="4.500" r="2.200" fill="#000" stroke="#bbb" strokeWidth="0.600" /></svg>
            </button>
            <button className="flex flex-1 items-center bg-[#3399ff] pr-[11px] pl-[3px] text-white">
              <span className="h-5 w-[26px] border border-[#124] bg-white" />
              <em className="ml-[7px] flex-1 text-left">背景</em>
              <svg width="8" height="10"><path d="M2 5V3C2 0.500 6 0.500 6 3V5" fill="none" stroke="#123" strokeWidth="1.300" /><path d="M0.500 4.500H7.500V9.500H0.500Z" fill="#abc" stroke="#123" /></svg>
            </button>
          </div>
        </div>
        <div className="flex w-3 flex-col items-center justify-between bg-[#efefef] py-1">
          <Arrow d="M0 5H6L3 2Z" />
          <Arrow d="M0 1H6L3 4Z" />
        </div>
        <div className="w-[2px]" />
      </div>
      <div className="flex h-[15px] shrink-0 items-start justify-end gap-[10px] pt-px pr-[20px]">
        <svg width="14" height="10" fill="none" stroke="#666"><rect x="0.500" y="3" width="6" height="4" rx="2" /><rect x="7.500" y="3" width="6" height="4" rx="2" /><path d="M4 5H10" /></svg>
        <button className="font-['Liberation_Serif',serif] text-[12px] leading-[10px] text-[#555] italic">fx.</button>
        <svg width="11" height="9"><path d="M0.500 0.500H10.500V8.500H0.500Z" fill="#aaa" stroke="#666" /><circle cx="5.500" cy="4.500" r="2.500" fill="#fff" /></svg>
        <svg width="12" height="10"><circle cx="5" cy="5" r="4.500" fill="#eee" stroke="#222" /><path d="M8.200 1.800L1.800 8.200A4.500 4.500 0 0 1 8.200 1.800Z" fill="#222" /><path d="M10 8H12V10H10Z" fill="#222" /></svg>
        <svg width="9" height="8"><path d="M0.500 1.500H4L5 2.500H8.500V7.500H0.500Z" fill="#eee" stroke="#555" /></svg>
        <svg width="9" height="9"><path d="M0.500 0.500H8.500V8.500H4.500V4.500H0.500Z" fill="#eee" stroke="#444" /></svg>
        <svg width="8" height="10" fill="none" stroke="#666"><path d="M0 2.500H8M3 1H5M1.500 3L2 9.500H6L6.500 3M4 4V8" /></svg>
      </div>
    </section>
  );
}

function Watermark() {
  return (
    <div className="pointer-events-none absolute right-[55px] bottom-[24px] w-[177px] font-['Open_Sans',sans-serif] text-white opacity-80 [text-shadow:0_0_2px_#999]">
      <div className="flex h-[58px] items-end">
        <span className="w-[60px] text-[40px] leading-[44px] font-bold">Bai</span>
        <div className="relative h-[58px] w-[52px]">
          <svg width="52" height="58" viewBox="0 0 52 58" fill="#fff" stroke="#bbb" strokeWidth="0.600">
            <ellipse cx="7" cy="23" rx="6.500" ry="8.500" />
            <ellipse cx="19.500" cy="10" rx="6.500" ry="9" />
            <ellipse cx="35" cy="11" rx="6.500" ry="8.500" />
            <ellipse cx="45" cy="27" rx="6.500" ry="8.500" />
            <path d="M26 25C33 25 36 31 40 35C46 40 49 45 47 51C45 58 37 57 32 56H19C13 58 6 57 4 51C2 45 5 40 11 36C16 32 18 25 26 25Z" />
          </svg>
          <span className="absolute top-[29px] left-[11px] text-[24px] leading-6 font-bold text-[#bdbdbd] [text-shadow:none]">du</span>
        </div>
        <span className="ml-[2px] font-['Noto_Sans_CJK_SC',sans-serif] text-[30px] leading-[40px] font-bold">经验</span>
      </div>
      <div className="text-[20px] leading-6">jingyan.baidu.com</div>
    </div>
  );
}

export default function App() {
  return (
    <div className={`relative flex h-screen flex-col overflow-hidden bg-[#dfe8ef] ${FONT}`}>
      <div className="flex min-h-0 flex-1 flex-col border-t-2 border-r-2 border-b-2 border-l-4 border-[#d8e2ea] border-t-[#7488a4] border-l-[#a3bacb]">
        <div className="relative flex min-h-0 flex-1 flex-col bg-[#d6d6d6]">
          <AppBar />
          <nav className="flex h-[19px] shrink-0 items-center gap-3 border-b border-[#999] pl-[7px] text-[10px] text-[#444]">
            {menus.map((menu) => (
              <button key={menu}>{menu}</button>
            ))}
          </nav>
          <OptionsBar />
          <div className="flex min-h-0 flex-1">
            <ToolBar />
            <DocumentArea />
            <div className="flex w-[223px] shrink-0 flex-col border-l border-[#555]">
              <div className="flex h-[10px] shrink-0 items-center bg-[#444] pr-[3px] pl-[19px] text-[#ddd]">
                <svg width="7" height="5" fill="currentColor"><path d="M3 0L0 2.500L3 5ZM6.500 0L3.500 2.500L6.500 5Z" /></svg>
                <svg width="7" height="5" fill="currentColor" className="ml-auto"><path d="M0 0L3 2.500L0 5ZM3.500 0L6.500 2.500L3.500 5Z" /></svg>
              </div>
              <div className="flex min-h-0 flex-1">
                <Dock />
                <div className="flex min-w-0 flex-1 flex-col border-r border-l border-[#777]">
                  <ColorPanel />
                  <MaskPanel />
                  <LayersPanel />
                </div>
              </div>
            </div>
          </div>
          <ShapePicker />
        </div>
      </div>
      <div className="h-[3px] shrink-0 bg-gradient-to-r from-[#4fb0d8] via-[#4a9dcb] to-[#1f5a96]" />
      <Watermark />
    </div>
  );
}
